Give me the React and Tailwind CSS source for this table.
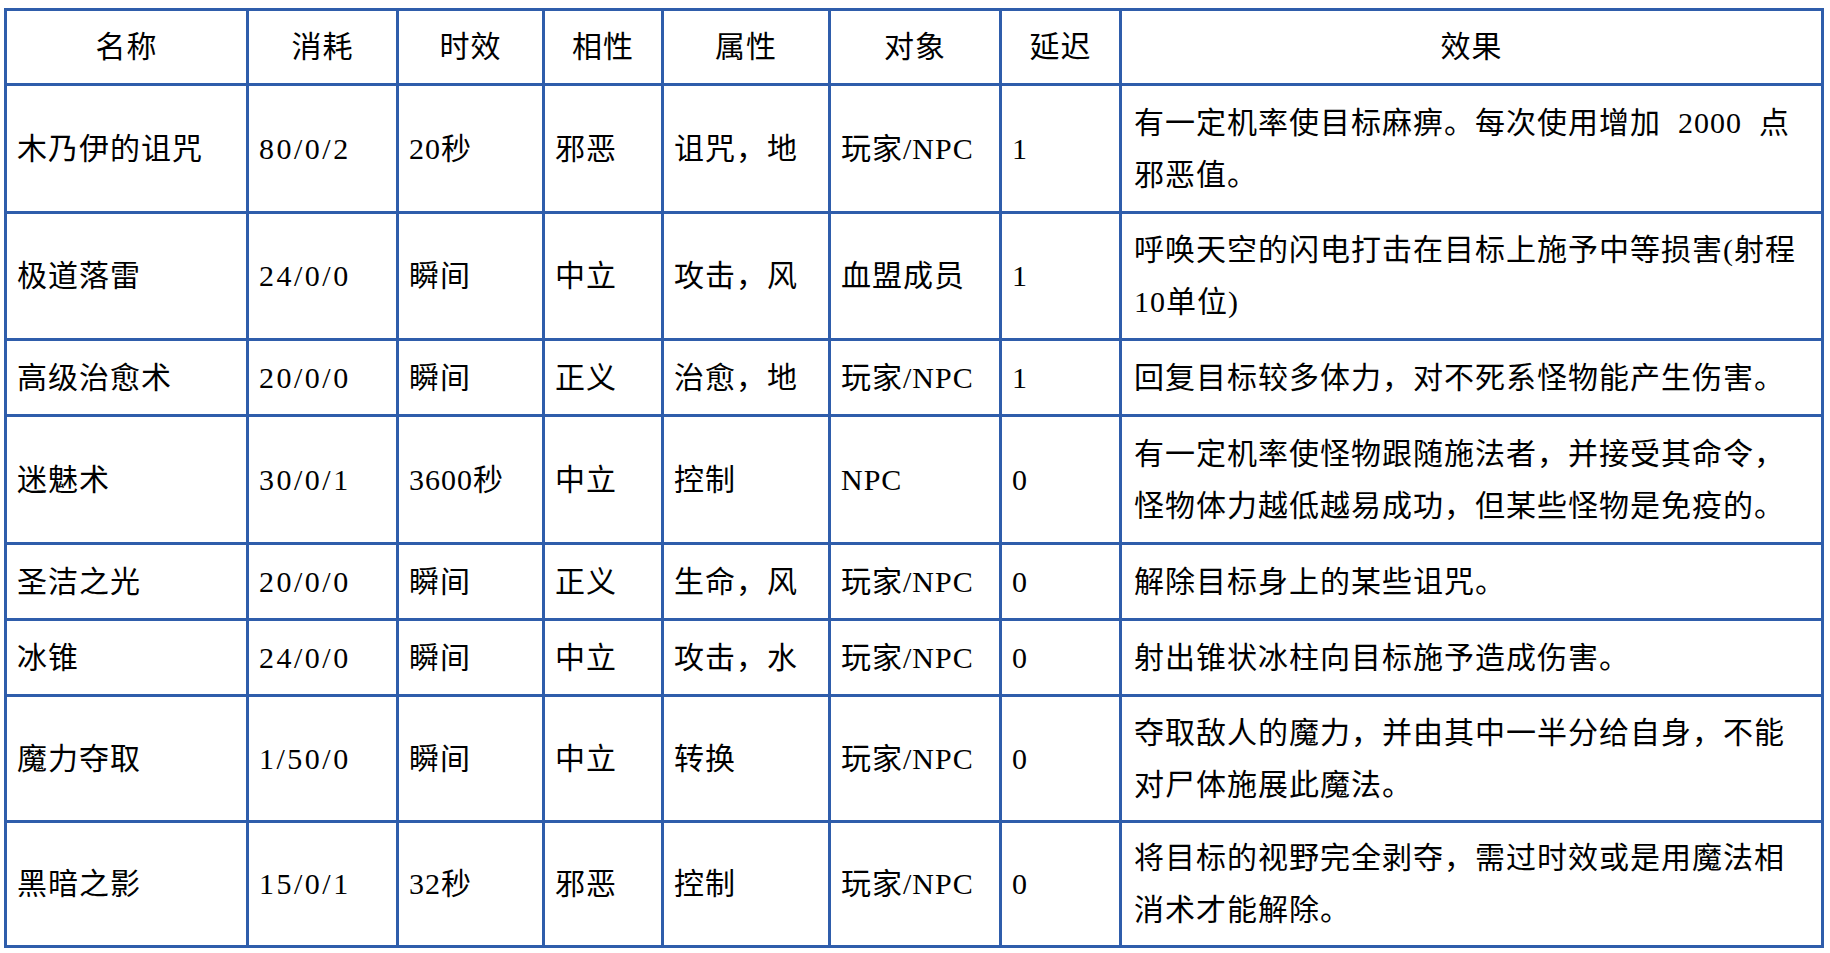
const headers = ["名称", "消耗", "时效", "相性", "属性", "对象", "延迟", "效果"];

const rows = [
  {
    h: "h-[128px]",
    cells: ["木乃伊的诅咒", "80/0/2", "20秒", "邪恶", "诅咒，地", "玩家/NPC", "1"],
    effect: ["有一定机率使目标麻痹。每次使用增加\u00a0 2000\u00a0 点", "邪恶值。"],
  },
  {
    h: "h-[127px]",
    cells: ["极道落雷", "24/0/0", "瞬间", "中立", "攻击，风", "血盟成员", "1"],
    effect: ["呼唤天空的闪电打击在目标上施予中等损害(射程", "10单位)"],
  },
  {
    h: "h-[76px]",
    cells: ["高级治愈术", "20/0/0", "瞬间", "正义", "治愈，地", "玩家/NPC", "1"],
    effect: ["回复目标较多体力，对不死系怪物能产生伤害。"],
  },
  {
    h: "h-[128px]",
    cells: ["迷魅术", "30/0/1", "3600秒", "中立", "控制", "NPC", "0"],
    effect: ["有一定机率使怪物跟随施法者，并接受其命令，", "怪物体力越低越易成功，但某些怪物是免疫的。"],
  },
  {
    h: "h-[76px]",
    cells: ["圣洁之光", "20/0/0", "瞬间", "正义", "生命，风", "玩家/NPC", "0"],
    effect: ["解除目标身上的某些诅咒。"],
  },
  {
    h: "h-[76px]",
    cells: ["冰锥", "24/0/0", "瞬间", "中立", "攻击，水", "玩家/NPC", "0"],
    effect: ["射出锥状冰柱向目标施予造成伤害。"],
  },
  {
    h: "h-[126px]",
    cells: ["魔力夺取", "1/50/0", "瞬间", "中立", "转换", "玩家/NPC", "0"],
    effect: ["夺取敌人的魔力，并由其中一半分给自身，不能", "对尸体施展此魔法。"],
  },
  {
    h: "h-[125px]",
    cells: ["黑暗之影", "15/0/1", "32秒", "邪恶", "控制", "玩家/NPC", "0"],
    effect: ["将目标的视野完全剥夺，需过时效或是用魔法相", "消术才能解除。"],
  },
];

const widths = ["w-[242px]", "w-[150px]", "w-[146px]", "w-[119px]", "w-[167px]", "w-[171px]", "w-[120px]", "w-[702px]"];

export default function App() {
  return (
    <div className="w-[1830px] h-[953px] bg-white overflow-hidden pt-[8px] pl-[4px]">
      <table
        className="table-fixed border-collapse w-[1820px] text-black text-[30px] tracking-[1px] leading-[52px]"
        style={{ fontFamily: '"Liberation Serif", "Noto Sans CJK SC", serif' }}
      >
        <colgroup>
          {widths.map((w, i) => (
            <col key={i} className={w} />
          ))}
        </colgroup>
        <thead>
          <tr className="h-[75px]">
            {headers.map((t) => (
              <th key={t} className="border-[3px] border-[#2f5dab] font-normal text-center align-middle">
                {t}
              </th>
            ))}
          </tr>
        </thead>
        <tbody>
          {rows.map((r, i) => (
            <tr key={i} className={r.h}>
              {r.cells.map((c, j) => (
                <td
                  key={j}
                  className={
                    j === 1
                      ? "border-[3px] border-[#2f5dab] pl-[10px] align-middle whitespace-nowrap tracking-[2.5px]"
                      : "border-[3px] border-[#2f5dab] pl-[10px] align-middle whitespace-nowrap"
                  }
                >
                  {c}
                </td>
              ))}
              <td className="border-[3px] border-[#2f5dab] pl-[12px] align-middle whitespace-nowrap">
                {r.effect.map((l, k) => (
                  <div key={k}>{l}</div>
                ))}
              </td>
            </tr>
          ))}
        </tbody>
      </table>
    </div>
  );
}
